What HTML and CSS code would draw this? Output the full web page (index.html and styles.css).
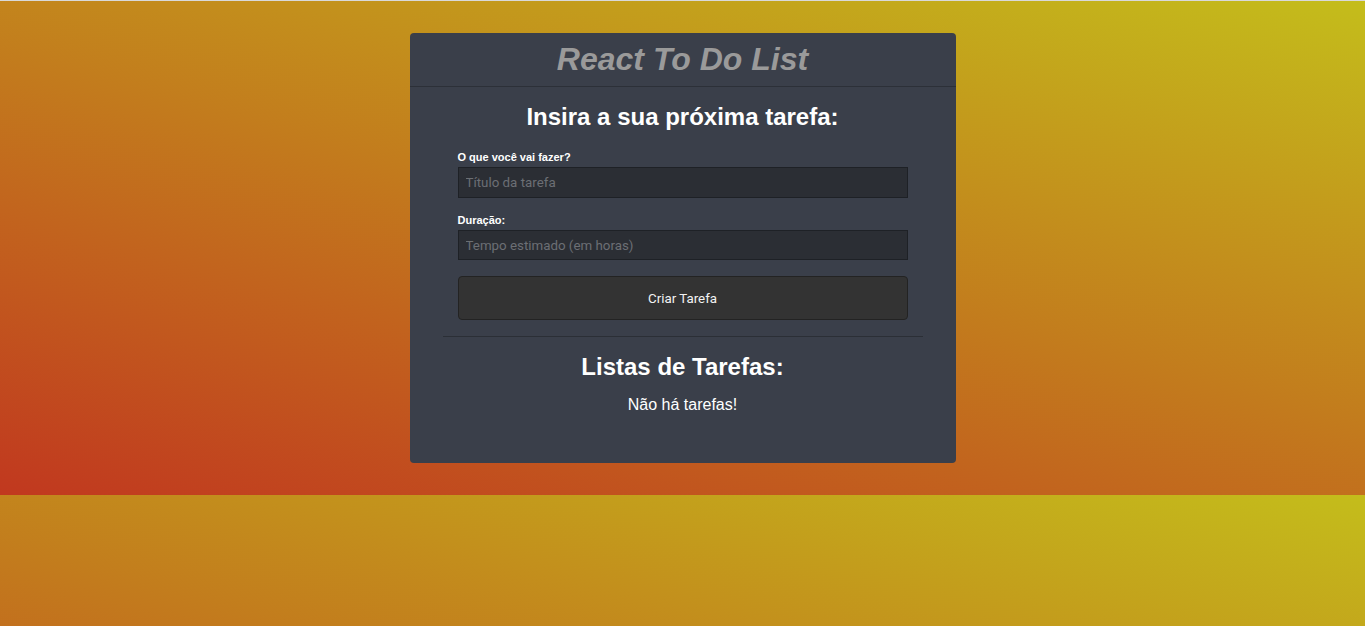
FILE: index.html
```html
<!DOCTYPE html>
<html lang="pt-BR">
<head>
<meta charset="utf-8">
<title>React To Do List</title>
<link rel="stylesheet" href="styles.css">
</head>
<body>
  <main class="card">
    <header class="card-header">
      <h1 class="app-title">React To Do List</h1>
    </header>
    <section class="card-body">
      <h2 class="section-title">Insira a sua próxima tarefa:</h2>
      <form class="task-form">
        <label class="field-label" for="title">O que você vai fazer?</label>
        <input class="field-input field-input--first" id="title" type="text" placeholder="Título da tarefa">
        <label class="field-label" for="duration">Duração:</label>
        <input class="field-input field-input--second" id="duration" type="text" placeholder="Tempo estimado (em horas)">
        <button class="submit-btn" type="button">Criar Tarefa</button>
      </form>
      <hr class="divider">
      <h2 class="section-title section-title--list">Listas de Tarefas:</h2>
      <p class="empty-msg">Não há tarefas!</p>
    </section>
  </main>
</body>
</html>
```

FILE: styles.css
```css
html {
  border-top: 1px solid #d9d9d9;
  background-color: #c4891e;
  background-image: linear-gradient(15deg, #c1381f 0%, #c4bd1b 100%);
  background-size: 100% 494px;
  background-repeat: repeat;
}

body {
  margin: 0;
  font-family: "Liberation Sans", Arial, sans-serif;
  color: #ffffff;
}

.card {
  width: 546px;
  margin: 32px auto 0;
  background: #3a3f4a;
  border-radius: 4px;
  padding-bottom: 49px;
}

.card-header {
  height: 53px;
  border-bottom: 1px solid #2c3038;
}

.app-title {
  margin: 0;
  font-size: 32px;
  line-height: 53px;
  font-style: italic;
  font-weight: 700;
  color: #9a9a9a;
  text-align: center;
}

.card-body {
  padding: 0 33px;
}

.section-title {
  margin: 16px 0 19px;
  font-size: 24px;
  line-height: 28px;
  font-weight: 700;
  text-align: center;
}

.section-title--list {
  margin: 16px 0 15px;
}

.task-form {
  display: flex;
  flex-direction: column;
  padding: 0 15px;
}

.field-label {
  display: block;
  font-size: 11px;
  line-height: 14px;
  font-weight: 700;
  margin-bottom: 3px;
}

.field-input {
  box-sizing: border-box;
  width: 100%;
  margin: 0 0 15px;
  padding: 0 7px;
  background: #2b2e34;
  border: 1px solid #1e2126;
  border-radius: 0;
  color: #ffffff;
  font-family: Roboto, "Liberation Sans", sans-serif;
  font-size: 13.333px;
  outline: none;
}

.field-input--first {
  height: 31px;
}

.field-input--second {
  height: 30px;
  margin-bottom: 16px;
}

.field-input::placeholder {
  color: #6c6f74;
}

.submit-btn {
  box-sizing: border-box;
  width: 100%;
  height: 44px;
  background: #333333;
  border: 1px solid #232323;
  border-radius: 4px;
  color: #f2f2f2;
  font-family: Roboto, "Liberation Sans", sans-serif;
  font-size: 13.333px;
  cursor: pointer;
}

.divider {
  margin: 16px 0 0;
  border: 0;
  border-top: 1px solid #2b2f36;
  height: 0;
}

.empty-msg {
  margin: 0;
  font-size: 16px;
  line-height: 18px;
  text-align: center;
}
```
